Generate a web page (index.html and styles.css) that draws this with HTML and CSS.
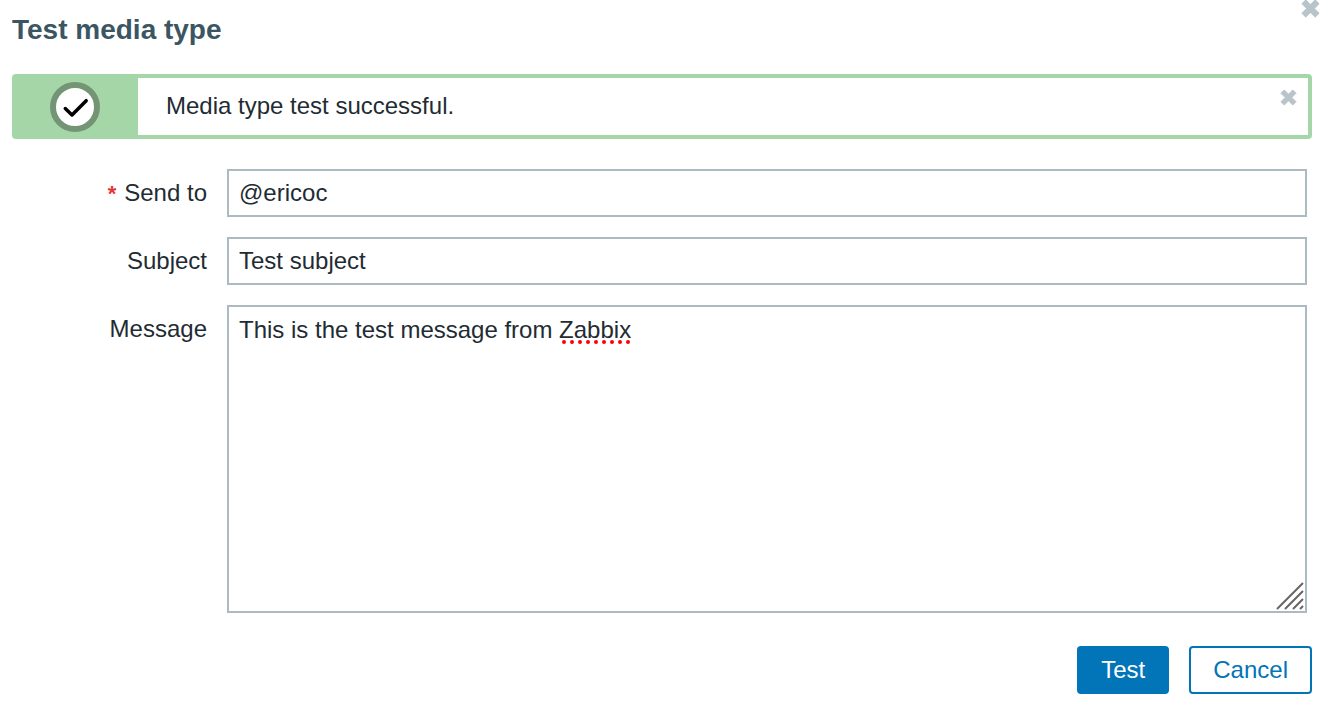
FILE: index.html
```html
<!DOCTYPE html>
<html lang="en">
<head>
<meta charset="utf-8">
<title>Test media type</title>
<link rel="stylesheet" href="styles.css">
</head>
<body>
<main class="dialog">
  <button class="close close-dialog" type="button" aria-label="Close">
    <svg width="19" height="19" viewBox="0 0 18 18"><path d="M4.500 1L9 5.500L13.500 1L17 4.500L12.500 9L17 13.500L13.500 17L9 12.500L4.500 17L1 13.500L5.500 9L1 4.500Z"/></svg>
  </button>
  <h1 class="title">Test media type</h1>
  <section class="notice" role="status">
    <div class="notice-mark">
      <svg width="50" height="50" viewBox="0 0 50 50" aria-hidden="true">
        <circle cx="25" cy="25" r="22" fill="#fff" stroke="#739475" stroke-width="6"/>
        <path d="M15.300 26.500L22 33L36.200 18.700" fill="none" stroke="#000" stroke-width="3.500" stroke-linecap="round" stroke-linejoin="round"/>
      </svg>
    </div>
    <p class="notice-text">Media type test successful.</p>
    <button class="close close-notice" type="button" aria-label="Dismiss">
      <svg width="17" height="17" viewBox="0 0 18 18"><path d="M4.500 1L9 5.500L13.500 1L17 4.500L12.500 9L17 13.500L13.500 17L9 12.500L4.500 17L1 13.500L5.500 9L1 4.500Z"/></svg>
    </button>
  </section>
  <form class="form">
    <div class="fields">
      <label class="label required" for="sendto">Send to</label>
      <input class="control" id="sendto" type="text" value="@ericoc" spellcheck="false">
      <label class="label" for="subject">Subject</label>
      <input class="control" id="subject" type="text" value="Test subject" spellcheck="false">
      <label class="label" for="message">Message</label>
      <div class="area">
        <textarea class="control control-area" id="message" spellcheck="false">This is the test message from Zabbix</textarea>
        <svg class="spelling" width="70" height="4" viewBox="0 0 70 4" aria-hidden="true"><path d="M2 2H68"/></svg>
        <svg class="grip" width="28" height="28" viewBox="0 0 28 28" aria-hidden="true"><path d="M1 27L27 1M9 27L27 9M17 27L27 17M24 27L27 24"/></svg>
      </div>
    </div>
    <div class="actions">
      <button class="button button-primary" type="button">Test</button>
      <button class="button" type="button">Cancel</button>
    </div>
  </form>
</main>
</body>
</html>
```
FILE: styles.css
```css
* {
  box-sizing: border-box;
}

body {
  margin: 0;
  background: #fff;
  color: #1f2c33;
  font-family: "Liberation Sans", Arial, sans-serif;
  font-size: 24px;
  line-height: 28px;
}

.dialog {
  position: relative;
  padding: 14px 14px 10px 12px;
}

.title {
  margin: 0 0 28px;
  color: #3c5563;
  font-size: 28px;
  font-weight: bold;
  line-height: 32px;
}

.close {
  padding: 0;
  border: 0;
  background: none;
  cursor: pointer;
}

.close svg {
  display: block;
}

.close path {
  fill: #b8c4ca;
  stroke: #b8c4ca;
  stroke-width: 1;
  stroke-linejoin: round;
}

.close-dialog {
  position: absolute;
  top: -1px;
  right: 6px;
}

.notice {
  display: flex;
  margin-bottom: 30px;
  border: 4px solid #a5d6a7;
  border-radius: 4px;
}

.notice-mark {
  display: flex;
  justify-content: center;
  flex: none;
  width: 122px;
  padding: 4px 4px 3px 0;
  background: #a5d6a7;
}

.notice-text {
  flex: 1;
  margin: 0;
  padding: 14px 28px;
}

.close-notice {
  align-self: flex-start;
  padding: 11px;
}

.fields {
  display: grid;
  grid-template-columns: 195px 1fr;
  gap: 20px;
  padding-right: 5px;
}

.label {
  padding-top: 10px;
  text-align: right;
}

.required::before {
  content: "*";
  margin-right: 8px;
  color: #e33734;
  font-size: 22px;
  font-weight: bold;
}

.control {
  display: block;
  width: 100%;
  height: 48px;
  margin: 0;
  padding: 8px 10px;
  border: 2px solid #acbbc2;
  border-radius: 0;
  background: #fff;
  color: inherit;
  font: inherit;
}

.area {
  position: relative;
}

.control-area {
  height: 308px;
  padding-top: 9px;
  resize: none;
}

.spelling {
  position: absolute;
  top: 35px;
  left: 335px;
}

.spelling path {
  fill: none;
  stroke: #f00;
  stroke-width: 4;
  stroke-linecap: round;
  stroke-dasharray: 0 8;
}

.grip {
  position: absolute;
  right: 3px;
  bottom: 3px;
}

.grip path {
  stroke: #666;
  stroke-width: 2;
}

.actions {
  display: flex;
  justify-content: flex-end;
  gap: 20px;
  margin-top: 33px;
}

.button {
  height: 48px;
  padding: 0 22px;
  border: 2px solid #0275b8;
  border-radius: 4px;
  background: #fff;
  color: #0275b8;
  font: inherit;
  cursor: pointer;
}

.button-primary {
  background: #0275b8;
  color: #fff;
}
```
